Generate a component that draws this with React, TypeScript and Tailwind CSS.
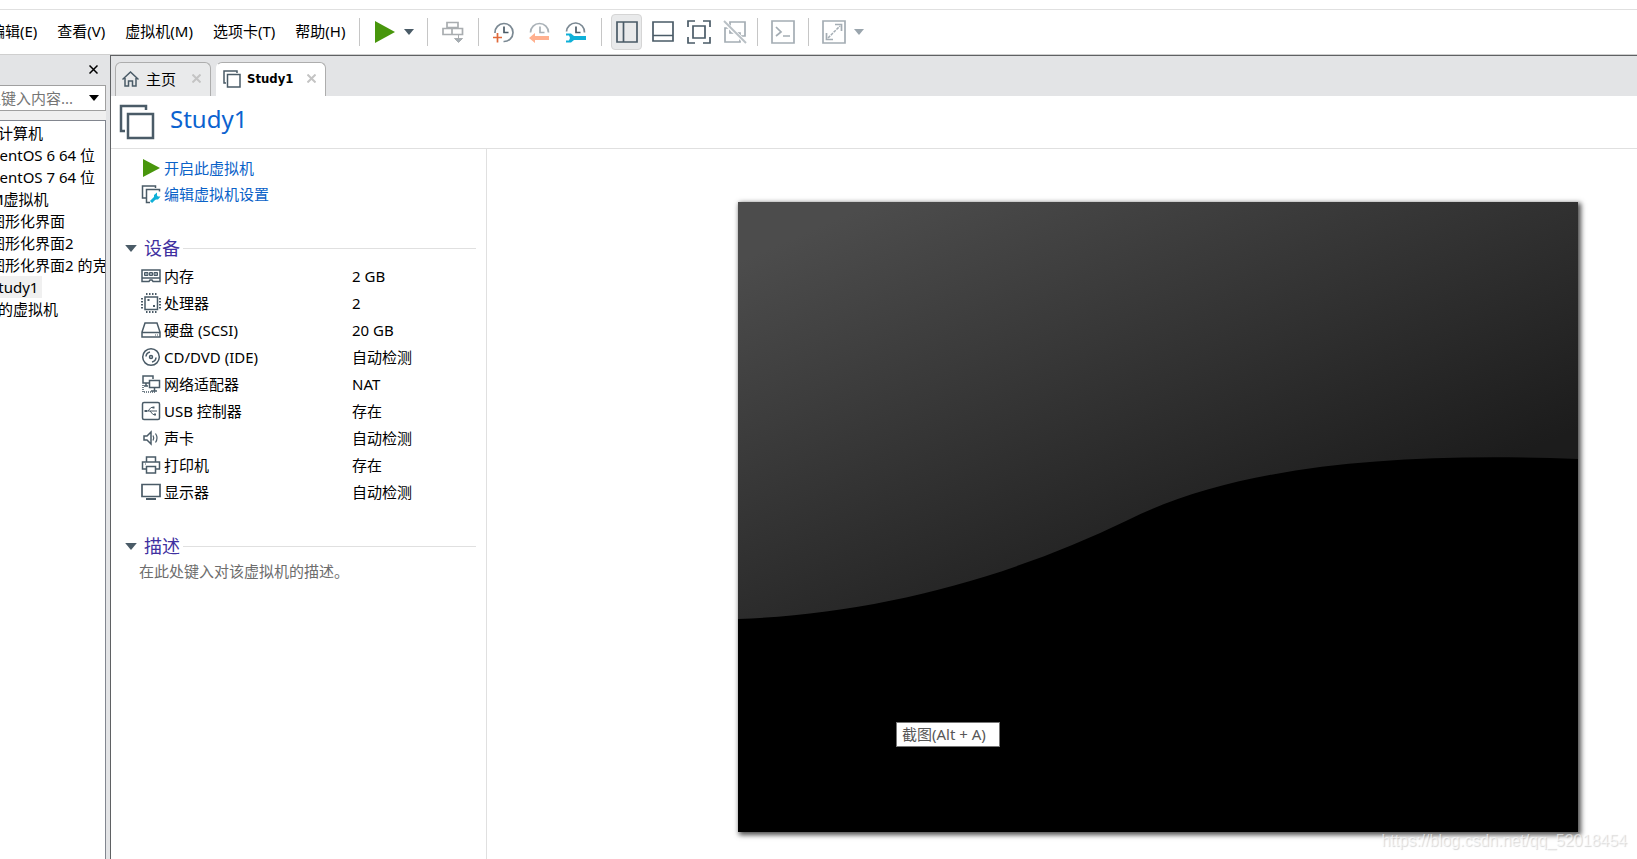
import type { ReactNode } from "react";

const SLATE = "#4a5b67";
const MUTED = "#a4adb4";

function Svg({ w = 22, h = 22, color = SLATE, children }: { w?: number; h?: number; color?: string; children: ReactNode }) {
  return (
    <svg
      width={w}
      height={h}
      viewBox={`0 0 ${w} ${h}`}
      fill="none"
      stroke={color}
      strokeWidth={1.5}
      aria-hidden="true"
      className="shrink-0"
    >
      {children}
    </svg>
  );
}

function Caret({ w = 10, h = 6, color = SLATE }: { w?: number; h?: number; color?: string }) {
  return (
    <svg width={w} height={h} viewBox="0 0 10 6" fill={color} aria-hidden="true" className="shrink-0">
      <path d="M0 0h10L5 6z" />
    </svg>
  );
}

function Cross({ size = 9, color = "#c4c4c4", width = 2 }: { size?: number; color?: string; width?: number }) {
  return (
    <svg width={size} height={size} viewBox="0 0 9 9" stroke={color} strokeWidth={width} aria-hidden="true">
      <path d="M0.5 0.5l8 8M8.5 0.5l-8 8" />
    </svg>
  );
}

const clockHands = <path d="M11 5.500v6h4.500" strokeWidth={1.700} />;

const toolIcons: Record<string, ReactNode> = {
  send: (
    <Svg color="#a9adb0">
      <path d="M5 1.500h11v5H5zM1 7.500h9v6H1zM10 7.500h10.500v6H10z" strokeWidth={1.700} />
      <path d="M16.500 14v4M12.500 17.500h8l-4 4z" fill={MUTED} strokeWidth={1} />
    </Svg>
  ),
  snapshot: (
    <Svg>
      <path d="M2 12a9 9 0 1 1 8.500 8.500" stroke="#7b8993" strokeWidth={1.700} />
      {clockHands}
      <path d="M0 16.500h9M4.500 12v9.500" stroke="#e0693a" strokeWidth={1.700} />
    </Svg>
  ),
  revert: (
    <Svg color="#a9b1b7">
      <path d="M1.500 11.500a9 9 0 0 1 18 0" strokeWidth={1.700} />
      {clockHands}
      <path d="M0 17l6-5v3h14v4H6v3z" fill="#ffb08f" stroke="none" />
    </Svg>
  ),
  manage: (
    <Svg>
      <path d="M1.500 10.500a9 9 0 0 1 18 1" stroke="#7b8993" strokeWidth={1.700} />
      {clockHands}
      <path d="M1 12.500h5l3 2.500h12v4H9l-3 2.500H1v-2h3l1-2.500-1-2.500H1z" fill="#0fb0d8" stroke="none" />
    </Svg>
  ),
  sidebar: (
    <Svg>
      <path d="M1 1h20v20H1zM7.500 1v20" strokeWidth={1.700} />
    </Svg>
  ),
  thumbnails: (
    <Svg>
      <path d="M1 1h20v19H1zM1 14.500h20" strokeWidth={1.700} />
    </Svg>
  ),
  fullscreen: (
    <Svg w={24} h={24}>
      <path d="M1 7V1h7M16 1h7v6M23 17v6h-7M8 23H1v-6" strokeWidth={1.700} />
      <path d="M6 6h12v12H6z" strokeWidth={1.700} />
    </Svg>
  ),
  unity: (
    <Svg w={24} h={24} color={MUTED}>
      <path d="M7 7V2h15v14h-4M2 8h5v5h10v9H2z" strokeWidth={1.700} />
      <path d="M0 1l23 22" stroke="#fff" strokeWidth={4} />
      <path d="M1 1l22 22" stroke="#b9c0c5" strokeWidth={2} />
    </Svg>
  ),
  terminal: (
    <Svg w={24} h={24} color={MUTED}>
      <path d="M1 1h22v22H1zM5 7l5 5-5 4M12 16h7" strokeWidth={1.700} />
    </Svg>
  ),
  stretch: (
    <Svg w={24} h={24} color={MUTED}>
      <path d="M1 1h22v22H1zM13 4.500h6.500V11M4.500 13v6.500H11" strokeWidth={1.700} />
      <path d="M6 18L18 6" strokeDasharray="3 1" />
    </Svg>
  ),
};

const deviceIcons: Record<string, ReactNode> = {
  memory: (
    <Svg w={20} h={20}>
      <path d="M1 4h18v11.500h-7l-1-1.500H9l-1 1.500H1zM1 12h18" />
      <path d="M3.500 6.500h3.500v3H3.500zM8.500 6.500h3v3h-3zM13 6.500h3.500v3H13z" fill="#93a0a9" strokeWidth={1} />
    </Svg>
  ),
  cpu: (
    <Svg w={20} h={20}>
      <path d="M4 4h12.500v12.500H4z" />
      <path d="M5 1h11M5 19h11M1 5v11M19 5v11" strokeWidth={2} strokeDasharray="1.500 1.500" />
      <path d="M6.500 7h2M12 13h2" strokeWidth={2} />
    </Svg>
  ),
  disk: (
    <Svg w={20} h={20}>
      <path d="M4 3h12l3 9v5H1v-5zM1 12.500h18" />
      <path d="M14 15h1M16 15h1" strokeWidth={1} />
    </Svg>
  ),
  cd: (
    <Svg w={20} h={20}>
      <circle cx="10" cy="10" r="8.300" />
      <circle cx="10" cy="10" r="1.500" />
      <path d="M5 9.500A5 5 0 0 1 9 5M15 10.500A5 5 0 0 1 11 15" />
    </Svg>
  ),
  network: (
    <Svg w={20} h={20}>
      <path d="M8 9H2V2h10v3M8.500 6.500h10v7h-10zM13.500 14v3M10 17h6M5 9v3M3 12h4" />
      <path d="M2 11v7h12" strokeDasharray="1 1" />
    </Svg>
  ),
  usb: (
    <Svg w={20} h={20}>
      <rect x="1.500" y="1.500" width="17" height="17" rx="1.500" />
      <path d="M4 10h12M7 10l3-3.500h2M9 10l3 3.500h2" strokeWidth={1} />
      <path d="M3.500 10h2.500M11.500 6.500h2M13 13.500h2" strokeWidth={2} />
    </Svg>
  ),
  sound: (
    <Svg w={20} h={20}>
      <path d="M3 8h3l4-4v12l-4-4H3z" />
      <path d="M12 7.500q1.500 2.500 0 5M14.500 5.500q3 4.500 0 9" strokeWidth={1.200} />
    </Svg>
  ),
  printer: (
    <Svg w={20} h={20}>
      <path d="M5.500 7V2h9v5M5 14H1.500V7h17v7H15M5.500 11.500h9v6.500h-9z" />
      <path d="M4 9h1" strokeWidth={1} />
    </Svg>
  ),
  display: (
    <Svg w={20} h={20}>
      <path d="M1 2.500h18v12H1z" strokeWidth={1.700} />
      <path d="M5 17h10" strokeWidth={2} />
    </Svg>
  ),
};

const menus = ["编辑(E)", "查看(V)", "虚拟机(M)", "选项卡(T)", "帮助(H)"];

const library = [
  { name: "CentOS 6 64 位" },
  { name: "CentOS 7 64 位" },
  { name: "M虚拟机" },
  { name: "图形化界面" },
  { name: "图形化界面2" },
  { name: "图形化界面2 的克隆" },
  { name: "Study1", selected: true },
];

const devices = [
  { icon: "memory", name: "内存", value: "2 GB" },
  { icon: "cpu", name: "处理器", value: "2" },
  { icon: "disk", name: "硬盘 (SCSI)", value: "20 GB" },
  { icon: "cd", name: "CD/DVD (IDE)", value: "自动检测" },
  { icon: "network", name: "网络适配器", value: "NAT" },
  { icon: "usb", name: "USB 控制器", value: "存在" },
  { icon: "sound", name: "声卡", value: "自动检测" },
  { icon: "printer", name: "打印机", value: "存在" },
  { icon: "display", name: "显示器", value: "自动检测" },
];

function Separator() {
  return <div className="h-7 w-px shrink-0 bg-[#c6c6c6]" />;
}

function ToolButton({ icon, label }: { icon: string; label: string }) {
  return (
    <button type="button" aria-label={label}>
      {toolIcons[icon]}
    </button>
  );
}

function MenuBar() {
  return (
    <header className="overflow-hidden bg-white">
      <div className="h-[9px]" />
      <div className="flex h-[46px] items-center border-y border-t-[#e0e0e0] border-b-[#cfcfcf]">
        <nav className="-ml-2.5 mr-3.5 flex shrink-0 gap-5 pb-[3px]">
          {menus.map((m) => (
            <button key={m} type="button" className="whitespace-nowrap">
              {m}
            </button>
          ))}
        </nav>
        <Separator />
        <div className="flex items-center gap-[9px] pr-[13px] pl-[15px]">
          <button type="button" aria-label="开启">
            <svg width="20" height="22" viewBox="0 0 20 22" fill="#48960c" aria-hidden="true">
              <path d="M0 0l20 11L0 22z" />
            </svg>
          </button>
          <button type="button" aria-label="电源选项">
            <Caret />
          </button>
        </div>
        <Separator />
        <div className="flex px-3.5">
          <ToolButton icon="send" label="发送 Ctrl+Alt+Del" />
        </div>
        <Separator />
        <div className="flex gap-3.5 px-3.5">
          <ToolButton icon="snapshot" label="拍摄快照" />
          <ToolButton icon="revert" label="恢复快照" />
          <ToolButton icon="manage" label="管理快照" />
        </div>
        <Separator />
        <div className="flex items-center gap-[5px] pr-[7px] pl-[9px]">
          <button
            type="button"
            aria-label="显示库"
            aria-pressed="true"
            className="flex h-9 w-[31px] items-center justify-center rounded border border-[#d5d5d5] bg-[#e9eaeb]"
          >
            {toolIcons.sidebar}
          </button>
          {["thumbnails", "fullscreen", "unity"].map((icon) => (
            <button key={icon} type="button" aria-label={icon} className="flex h-9 w-[31px] items-center justify-center">
              {toolIcons[icon]}
            </button>
          ))}
        </div>
        <Separator />
        <div className="flex px-[13px]">
          <ToolButton icon="terminal" label="控制台" />
        </div>
        <Separator />
        <div className="flex items-center gap-2 pl-[13px]">
          <ToolButton icon="stretch" label="自由拉伸" />
          <button type="button" aria-label="拉伸选项">
            <Caret color="#9aa5ad" />
          </button>
        </div>
      </div>
    </header>
  );
}

function Sidebar() {
  return (
    <aside className="flex w-[110px] shrink-0 flex-col overflow-hidden bg-[#e3e4e6] pr-1">
      <div className="flex h-[30px] items-center justify-end pr-2 pb-0.5">
        <button type="button" aria-label="关闭库">
          <Cross color="#000" width={1.5} />
        </button>
      </div>
      <div className="-ml-12 flex h-[26px] items-center border border-[#a0a0a0] bg-white pr-[5px]">
        <input
          type="text"
          aria-label="搜索"
          placeholder="在此处键入内容..."
          className="w-0 flex-1 pl-[3px] outline-none placeholder:text-[#757575]"
        />
        <button type="button" aria-label="搜索选项">
          <Caret w={12} h={6} color="#000" />
        </button>
      </div>
      <div className="h-[9px] bg-[#f0f0f0]" />
      <ul className="-ml-12 flex-1 overflow-hidden border border-b-0 border-[#82868f] bg-white pt-px pl-[15px] leading-[22px] whitespace-nowrap">
        <li>
          我的计算机
          <ul className="pl-[22px]">
            {library.map((vm) => (
              <li key={vm.name}>
                <span className={vm.selected ? "inline-block bg-[#f0f0f0] pr-1" : "inline-block"}>{vm.name}</span>
              </li>
            ))}
          </ul>
        </li>
        <li>共享的虚拟机</li>
      </ul>
    </aside>
  );
}

function Tabs() {
  return (
    <div className="flex h-10 items-end gap-[5px] bg-[#e3e4e6] pl-1">
      <div className="flex h-[34px] w-24 items-center rounded-t-md border border-b-0 border-[#adadad] bg-[#e9eaeb] pr-[9px] pb-0.5 pl-1.5">
        <svg width="17" height="16" viewBox="0 0 17 16" fill="none" stroke={SLATE} strokeWidth="1.5" aria-hidden="true">
          <path d="M0.500 8.500l8-7.500 8 7.500M3 7v8h3.500v-5h4v5H14V7" />
        </svg>
        <button type="button" className="ml-[7px] flex-1 text-left text-[15px]">
          主页
        </button>
        <button type="button" aria-label="关闭主页">
          <Cross />
        </button>
      </div>
      <div className="flex h-[34px] w-[110px] items-center rounded-t-md border border-b-0 border-l-white border-[#adadad] bg-white pr-[9px] pb-0.5 pl-1.5">
        <svg width="18" height="18" viewBox="0 0 18 18" fill="none" stroke={SLATE} strokeWidth="1.5" aria-hidden="true">
          <path d="M3 13H1V1h13v2M4.500 4.500h12.500V17H4.500z" />
        </svg>
        <button
          type="button"
          className="ml-1.5 flex-1 text-left font-['DejaVu_Sans_Condensed','DejaVu_Sans',sans-serif] text-[13px] font-bold"
        >
          Study1
        </button>
        <button type="button" aria-label="关闭 Study1">
          <Cross />
        </button>
      </div>
    </div>
  );
}

function SectionHeading({ children }: { children: ReactNode }) {
  return (
    <div className="mt-[27px] flex h-7 items-center pr-2.5 pl-3.5">
      <Caret w={12} h={7} />
      <h2 className="mr-[3px] ml-[7px] text-[18px] text-[#4030a0]">{children}</h2>
      <div className="h-px flex-1 bg-[#e0e0e0]" />
    </div>
  );
}

function Details() {
  return (
    <section className="w-[376px] shrink-0 border-r border-[#e0e0e0] pt-1.5">
      <div className="pl-[30px] text-[#0a62c8]">
        <a href="#power-on" className="flex h-[26px] items-center gap-[3px]">
          <Svg w={20} h={20}>
            <path d="M2 1l17 9-17 9z" fill="#48960c" stroke="none" />
          </Svg>
          开启此虚拟机
        </a>
        <a href="#settings" className="flex h-[26px] items-center gap-[3px]">
          <Svg w={20} h={20}>
            <path d="M5 14H1.500V2h13v2M9 18.500H5.500v-13h13v2" />
            <path d="M10 18l5.500-5.500" stroke="#0fb0d8" strokeWidth={3} />
            <path d="M13 13.500V11l3-2.500v3l1 1h2.500l-2.500 3h-3z" fill="#0fb0d8" stroke="none" />
          </Svg>
          编辑虚拟机设置
        </a>
      </div>

      <SectionHeading>设备</SectionHeading>
      <table className="ml-[30px] border-collapse">
        <tbody>
          {devices.map((d) => (
            <tr key={d.name} className="h-[27px]">
              <th scope="row" className="w-[211px] p-0 text-left font-normal">
                <span className="flex items-center gap-[3px]">
                  {deviceIcons[d.icon]}
                  {d.name}
                </span>
              </th>
              <td className="p-0">{d.value}</td>
            </tr>
          ))}
        </tbody>
      </table>

      <SectionHeading>描述</SectionHeading>
      <p className="pl-7 leading-[22px] text-[#6d6d6d]">在此处键入对该虚拟机的描述。</p>
    </section>
  );
}

function Preview() {
  return (
    <section className="min-w-0 flex-1 pt-[53px] pr-[59px] pb-[27px] pl-[251px]">
      <div className="relative aspect-[4/3] bg-black shadow-[2px_2px_5px_1px_rgba(0,0,0,0.7)]">
        <svg viewBox="0 0 840 630" className="block h-full w-full" aria-hidden="true">
          <defs>
            <linearGradient id="sheen" gradientUnits="userSpaceOnUse" x1="22" y1="50" x2="217" y2="498">
              <stop offset="0" stopColor="#4c4c4c" />
              <stop offset="1" stopColor="#1c1c1c" />
            </linearGradient>
          </defs>
          <path d="M0 0H840V257C660 250 500 263 390 318C262 380 130 412 0 417z" fill="url(#sheen)" />
        </svg>
        <div
          role="tooltip"
          className="absolute top-[520px] left-[158px] w-26 border border-[#767676] bg-white px-[5px] leading-[23px] whitespace-nowrap text-[#575757]"
        >
          截图(Alt + A)
        </div>
      </div>
    </section>
  );
}

export default function App() {
  return (
    <div className="relative flex min-h-screen flex-col bg-white font-['Noto_Sans','Noto_Sans_CJK_SC',sans-serif] text-[15px] leading-5 text-black">
      <MenuBar />
      <div className="flex flex-1">
        <Sidebar />
        <main className="flex min-w-0 flex-1 flex-col border-t border-l border-[#5f6163]">
          <Tabs />
          <div className="flex h-[53px] items-center border-b border-[#e0e0e0] pl-2">
            <svg width="36" height="36" viewBox="0 0 36 36" fill="none" stroke={SLATE} strokeWidth="2.5" aria-hidden="true">
              <path d="M6 27H2V2h25v4M9 10h25v24H9z" />
            </svg>
            <h1 className="ml-[15px] pb-1.5 text-[24px] leading-8 text-[#0b62cf]">Study1</h1>
          </div>
          <div className="flex flex-1">
            <Details />
            <Preview />
          </div>
        </main>
      </div>
      <span className="absolute right-2.5 bottom-2 font-['Liberation_Sans',sans-serif] text-[16px] text-white/60 [text-shadow:1px_1px_1px_rgba(0,0,0,0.16)]">
        https://blog.csdn.net/qq_52018454
      </span>
    </div>
  );
}
